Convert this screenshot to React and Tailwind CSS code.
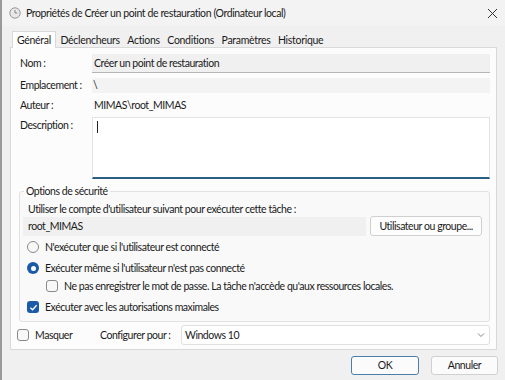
import React from "react";

function Radio({ checked }) {
  return checked ? (
    <span className="w-[12px] h-[12px] rounded-full bg-[#1b5aa6] flex items-center justify-center shrink-0">
      <span className="w-[5px] h-[5px] rounded-full bg-white" />
    </span>
  ) : (
    <span className="w-[12px] h-[12px] rounded-full border border-[#8a8a8a] bg-[#f8f8f8] shrink-0" />
  );
}

function Check({ checked }) {
  return checked ? (
    <span className="w-[12px] h-[12px] rounded-[3px] bg-[#1b5aa6] flex items-center justify-center shrink-0">
      <svg width="9" height="9" viewBox="0 0 10 10">
        <path d="M1.5 5.2 L4 7.5 L8.5 2.5" fill="none" stroke="white" strokeWidth="1.4" />
      </svg>
    </span>
  ) : (
    <span className="w-[12px] h-[12px] rounded-[3px] border border-[#8a8a8a] bg-[#f8f8f8] shrink-0" />
  );
}

export default function App() {
  const tabs = ["Déclencheurs", "Actions", "Conditions", "Paramètres", "Historique"];
  return (
    <div className="w-[505px] h-[380px] bg-[#f0f0f0] overflow-hidden text-[10.5px] tracking-[-0.45px] text-[#1a1a1a] font-['Lato',sans-serif] leading-none border-l-2 border-[#9a9a9a] flex flex-col whitespace-nowrap">
      {/* Title bar */}
      <div className="h-[26px] bg-[#f3f3f3] flex items-center pl-[7px] pr-[7px] shrink-0">
        <svg width="12" height="12" viewBox="0 0 12 12" className="mr-[5px]">
          <circle cx="6" cy="6" r="5.2" fill="#e8e8e8" stroke="#8c8c8c" strokeWidth="0.9" />
          <path d="M6 3 V6 H8.3" fill="none" stroke="#7a7a7a" strokeWidth="0.9" />
        </svg>
        <span className="tracking-[-0.4px]">Propriétés de Créer un point de restauration (Ordinateur local)</span>
        <span className="ml-auto">
          <svg width="11" height="11" viewBox="0 0 11 11">
            <path d="M1 1 L10 10 M10 1 L1 10" stroke="#333" strokeWidth="1" />
          </svg>
        </span>
      </div>

      {/* Tabs */}
      <div className="flex items-end pl-[10px] mt-[5px] h-[16px] shrink-0 tracking-[-0.3px]">
        <div className="h-[17px] px-[4px] bg-white border border-b-0 border-[#d9d9d9] flex items-center relative z-10 -mb-px">Général</div>
        {tabs.map((t) => (
          <div key={t} className="h-[15px] px-[3px] pt-[1px] flex items-center ml-[1.5px]">{t}</div>
        ))}
      </div>

      {/* Panel */}
      <div className="mx-[8px] bg-[#fcfcfc] border border-[#d9d9d9] h-[303px] pt-[6px] pl-[9px] pr-[6px] flex flex-col shrink-0">
        <div className="flex items-center h-[19px]">
          <span className="w-[72px]">Nom :</span>
          <div className="flex-1 h-[19px] bg-[#f0f0f0] border-b border-[#b5b5b5] flex items-center pl-[2px]">Créer un point de restauration</div>
        </div>
        <div className="flex items-center h-[15px] mt-[5px]">
          <span className="w-[72px]">Emplacement :</span>
          <div className="flex-1 h-[15px] bg-[#f3f3f3] flex items-center pl-[1px]">\</div>
        </div>
        <div className="flex items-center h-[14px] mt-[5px]">
          <span className="w-[72px]">Auteur :</span>
          <span className="pl-[2px]">MIMAS\root_MIMAS</span>
        </div>
        <div className="flex mt-[5px]">
          <span className="w-[72px] pt-[3px]">Description :</span>
          <div className="flex-1 h-[62px] bg-white border border-[#e3e3e3] border-b-2 border-b-[#2b5f82] pl-[4px] pt-[3px]">
            <span className="block w-px h-[12px] bg-[#222]" />
          </div>
        </div>

        {/* Group box */}
        <div className="relative mt-[12px] ml-[-1px] bg-[#f9f9f9] border border-[#e2e2e2] rounded-[3px] pl-[7px] pr-[7px] pt-[11px] pb-[7px] flex flex-col">
          <span className="absolute left-[4px] top-[-6px] px-[2px] bg-[#fcfcfc]">Options de sécurité</span>
          <div className="h-[12px] flex items-center pl-[1px]">Utiliser le compte d'utilisateur suivant pour exécuter cette tâche :</div>
          <div className="flex items-center mt-[1px] ml-[-4px]">
            <div className="w-[344px] h-[19px] bg-[#f0f0f0] flex items-center pl-[5px]">root_MIMAS</div>
            <div className="ml-[4px] w-[112px] h-[20px] bg-[#fdfdfd] border border-[#d0d0d0] rounded-[3px] flex items-center justify-center">Utilisateur ou groupe...</div>
          </div>
          <div className="flex items-center gap-[6px] mt-[4px] h-[14px]">
            <Radio />
            <span>N'exécuter que si l'utilisateur est connecté</span>
          </div>
          <div className="flex items-center gap-[6px] mt-[7px] h-[14px]">
            <Radio checked />
            <span>Exécuter même si l'utilisateur n'est pas connecté</span>
          </div>
          <div className="flex items-center gap-[6px] mt-[4px] h-[14px] pl-[19px]">
            <Check />
            <span>Ne pas enregistrer le mot de passe. La tâche n'accède qu'aux ressources locales.</span>
          </div>
          <div className="flex items-center gap-[6px] mt-[7px] h-[14px]">
            <Check checked />
            <span>Exécuter avec les autorisations maximales</span>
          </div>
        </div>

        {/* Bottom row */}
        <div className="flex items-center mt-[3px] h-[20px] ml-[-3px]">
          <Check />
          <span className="ml-[6px] w-[65px]">Masquer</span>
          <span className="w-[81px]">Configurer pour :</span>
          <div className="flex-1 h-[20px] bg-white border border-[#e0e0e0] rounded-[3px] flex items-center pl-[3px] pr-[4px]">
            <span>Windows 10</span>
            <svg width="8" height="6" viewBox="0 0 8 6" className="ml-auto">
              <path d="M1 1.5 L4 4.5 L7 1.5" fill="none" stroke="#777" strokeWidth="0.9" />
            </svg>
          </div>
        </div>
      </div>

      {/* Buttons */}
      <div className="flex justify-end gap-[12px] pr-[7px] mt-[6px]">
        <div className="w-[68px] h-[19px] bg-[#fbfbfb] border-[1.5px] border-[#4b7fa8] rounded-[3px] flex items-center justify-center">OK</div>
        <div className="w-[67px] h-[19px] bg-[#fbfbfb] border border-[#d0d0d0] rounded-[3px] flex items-center justify-center">Annuler</div>
      </div>
    </div>
  );
}
